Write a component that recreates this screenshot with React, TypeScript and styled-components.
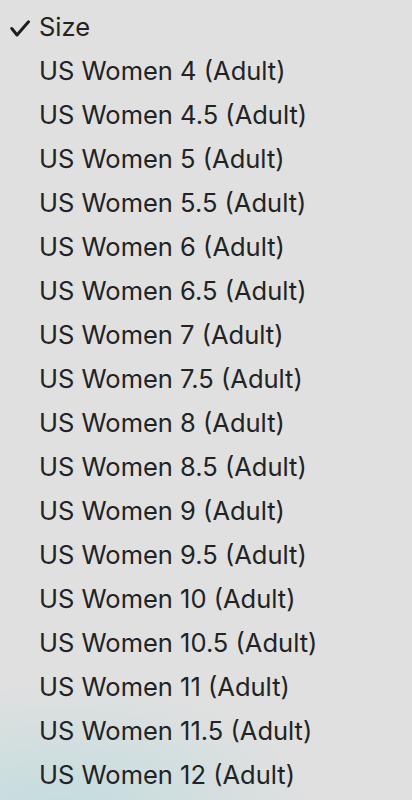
import React from 'react';
import styled, { createGlobalStyle } from 'styled-components';

const GlobalStyle = createGlobalStyle`
  html, body {
    margin: 0;
    padding: 0;
    background: #e0e0e0;
  }
  body {
    font-family: Inter, "Noto Sans", sans-serif;
  }
`;

const Menu = styled.ul`
  list-style: none;
  margin: 0;
  padding: 4px 0 0;
  width: 412px;
  height: 800px;
  box-sizing: border-box;
  overflow: hidden;
  background:
    radial-gradient(ellipse 260px 140px at 60px 820px, rgba(190, 220, 222, 0.9), rgba(224, 224, 224, 0) 100%),
    #e0e0e0;
`;

const Item = styled.li`
  display: flex;
  align-items: center;
  height: 44px;
  padding-left: 39px;
  position: relative;
  font-size: 25.5px;
  color: #232323;
  white-space: nowrap;
`;

const Check = styled.svg`
  position: absolute;
  left: 10px;
  top: 16px;
  width: 20px;
  height: 17px;
`;

const sizes = ['4', '4.5', '5', '5.5', '6', '6.5', '7', '7.5', '8', '8.5', '9', '9.5', '10', '10.5', '11', '11.5', '12'];

export default function App() {
  return (
    <>
      <GlobalStyle />
      <Menu>
        <Item>
          <Check viewBox="0 0 20 17">
            <path d="M1.8 8.5 L7 15 L18.5 1.8" fill="none" stroke="#1e1e1e" strokeWidth="3" strokeLinecap="round" strokeLinejoin="round" />
          </Check>
          Size
        </Item>
        {sizes.map((s) => (
          <Item key={s}>US Women {s} (Adult)</Item>
        ))}
      </Menu>
    </>
  );
}
